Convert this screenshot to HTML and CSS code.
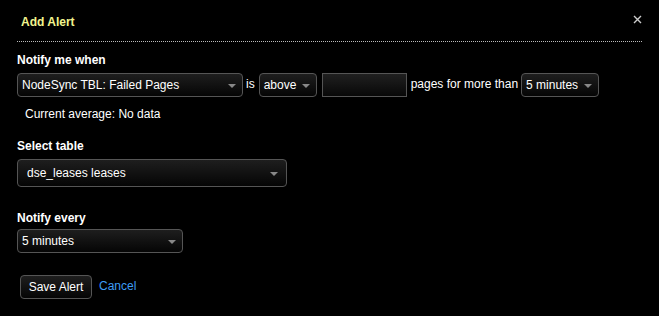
FILE: index.html
```html
<!DOCTYPE html>
<html>
<head>
<meta charset="utf-8">
<link rel="stylesheet" href="styles.css">
</head>
<body>
<div class="dialog">
  <div class="header">
    <span class="title">Add Alert</span>
    <svg class="close" width="9" height="9" viewBox="0 0 9 9"><path d="M1 1L8 8M8 1L1 8" stroke="#ccc" stroke-width="1.4"/></svg>
  </div>
  <div class="section">
    <div class="label">Notify me when</div>
    <div class="row">
      <div class="select metric"><span>NodeSync TBL: Failed Pages</span><i class="caret"></i></div>
      <span class="txt is">is</span>
      <div class="select cmp"><span>above</span><i class="caret"></i></div>
      <div class="input"></div>
      <span class="txt">pages for more than</span>
      <div class="select dur"><span>5 minutes</span><i class="caret"></i></div>
    </div>
    <div class="avg">Current average: No data</div>
  </div>
  <div class="section s2">
    <div class="label">Select table</div>
    <div class="select table"><span>dse_leases leases</span><i class="caret"></i></div>
  </div>
  <div class="section s3">
    <div class="label">Notify every</div>
    <div class="select every"><span>5 minutes</span><i class="caret"></i></div>
  </div>
  <div class="actions">
    <div class="btn">Save Alert</div>
    <a class="cancel">Cancel</a>
  </div>
</div>
</body>
</html>
```
FILE: styles.css
```css
html, body {
  margin: 0;
  padding: 0;
  background: #000;
}
body {
  font-family: "Liberation Sans", Arial, sans-serif;
  font-size: 12px;
  color: #fff;
}
.dialog {
  width: 659px;
  height: 316px;
  box-sizing: border-box;
  padding: 0 17px;
}
.header {
  display: flex;
  justify-content: space-between;
  align-items: center;
  height: 42px;
  border-bottom: 1px dotted #bbb;
  width: 625px;
  box-sizing: border-box;
  padding-left: 4px;
}
.title {
  color: #f2f58e;
  font-weight: bold;
  font-size: 12px;
  padding-top: 3px;
}
.close {
  margin-right: 0;
  margin-top: -2px;
}
.section {
  padding-top: 11px;
}
.label {
  font-weight: bold;
  font-size: 12px;
  line-height: 14px;
}
.row {
  display: flex;
  align-items: center;
  margin-top: 6px;
  height: 24px;
}
.select {
  box-sizing: border-box;
  height: 24px;
  border: 1px solid #555;
  border-radius: 4px;
  background: linear-gradient(#1e1e1e, #050505);
  display: flex;
  align-items: center;
  justify-content: space-between;
  padding: 0 6px 0 4px;
  font-size: 12px;
  color: #fff;
}
.caret {
  width: 0;
  height: 0;
  border-left: 4px solid transparent;
  border-right: 4px solid transparent;
  border-top: 4px solid #888;
  margin-top: 1px;
}
.metric { width: 226px; }
.cmp { width: 58px; margin-left: 4px; }
.input {
  box-sizing: border-box;
  width: 85px;
  height: 24px;
  border: 1px solid #555;
  background: linear-gradient(#202020, #080808);
  margin-left: 5px;
}
.txt {
  margin-left: 4px;
  font-size: 12px;
  margin-top: -3px;
}
.txt.is { margin-left: 3px; }
.dur { width: 78px; margin-left: 3px; }
.avg {
  margin-top: 10px;
  padding-left: 8px;
  line-height: 14px;
}
.s2 { padding-top: 18px; }
.s2 .label { margin-bottom: 6px; }
.table { width: 270px; height: 28px; padding-left: 9px; padding-right: 8px; }
.s3 { padding-top: 24px; }
.s3 .label { margin-bottom: 4px; }
.every { width: 166px; padding-left: 4px; }
.actions {
  display: flex;
  align-items: center;
  margin-top: 22px;
  padding-left: 3px;
}
.btn {
  box-sizing: border-box;
  height: 24px;
  width: 72px;
  border: 1px solid #555;
  border-radius: 4px;
  background: linear-gradient(#1e1e1e, #050505);
  display: flex;
  align-items: center;
  justify-content: center;
  font-size: 12px;
}
.cancel {
  color: #3d9cf5;
  margin-left: 7px;
  margin-top: -3px;
}
```
